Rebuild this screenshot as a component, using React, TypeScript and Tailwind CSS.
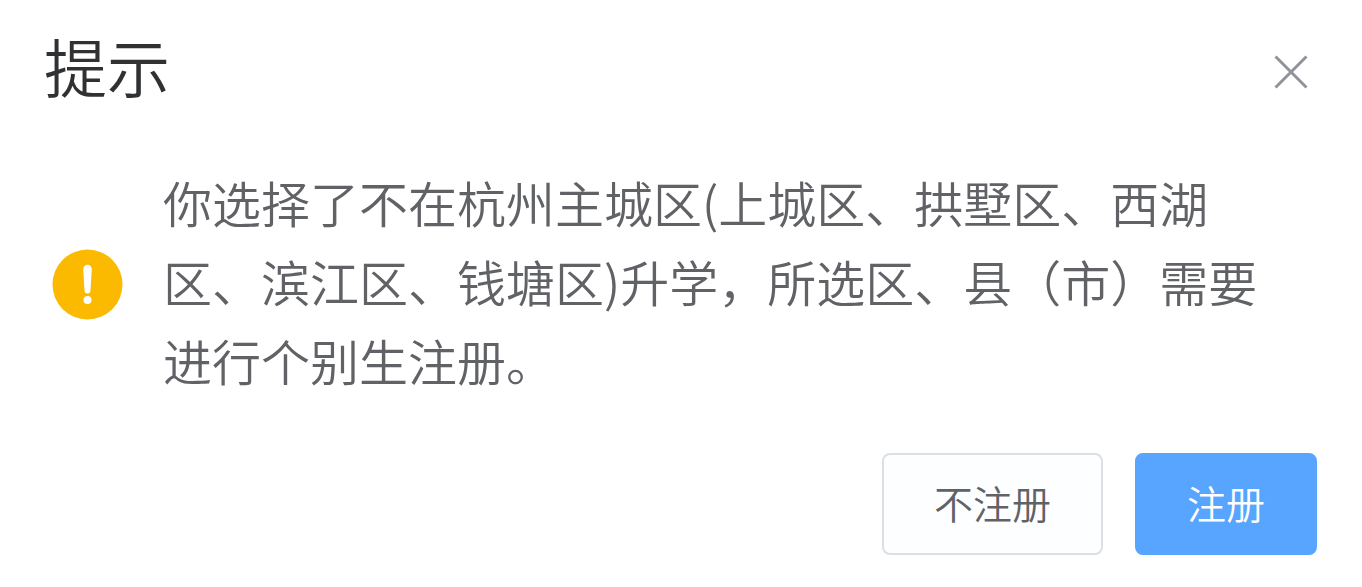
import React from 'react';

const AlertDialog = () => {
    return (
        <div
            role="alertdialog"
            aria-labelledby="dialog-title"
            aria-describedby="dialog-message"
            className="flex min-h-screen flex-col bg-white pt-5 pr-[45px] pb-8 pl-11 font-['Noto_Sans_CJK_SC',sans-serif] font-[350]"
        >
            <div className="flex items-start justify-between">
                <h1 id="dialog-title" className="text-[63px] leading-[90px] text-[#303133]">
                    提示
                </h1>
                <button type="button" aria-label="关闭" className="mt-6 cursor-pointer p-2 text-[#909399]">
                    <svg width="36" height="40" viewBox="0 0 36 40" fill="none" stroke="currentColor" strokeWidth="3">
                        <path d="M2.5 4.5L33.5 35.5M33.5 4.5L2.5 35.5" />
                    </svg>
                </button>
            </div>
            <div className="mt-13 flex items-center gap-10 pr-10 pl-2">
                <svg width="71" height="71" viewBox="0 0 71 71" className="mt-2 shrink-0" aria-hidden="true">
                    <circle cx="35.5" cy="35.5" r="35" fill="#fbb900" />
                    <path d="M31.2 20a4.3 4.3 0 0 1 8.6 0l-1.3 21.5a3 3 0 0 1-6 0z" fill="#fff" />
                    <circle cx="35.5" cy="51" r="4" fill="#fff" />
                </svg>
                <p id="dialog-message" className="text-[49px] leading-[79px] text-[#606266]">
                    你选择了不在杭州主城区(上城区、拱墅区、西湖区、滨江区、钱塘区)升学，所选区、县（市）需要进行个别生注册。
                </p>
            </div>
            <div className="mt-auto flex justify-end gap-8">
                <button
                    type="button"
                    className="cursor-pointer rounded-lg border-2 border-[#dcdfe6] bg-[#fdfeff] px-[50px] pt-[22px] pb-[26px] text-[39px] leading-[50px] text-[#606266]"
                >
                    不注册
                </button>
                <button
                    type="button"
                    className="cursor-pointer rounded-lg border-2 border-[#58a5ff] bg-[#58a5ff] px-[50px] pt-[22px] pb-[26px] text-[39px] leading-[50px] text-white"
                >
                    注册
                </button>
            </div>
        </div>
    );
};

export default function App() {
    return <AlertDialog />;
}
